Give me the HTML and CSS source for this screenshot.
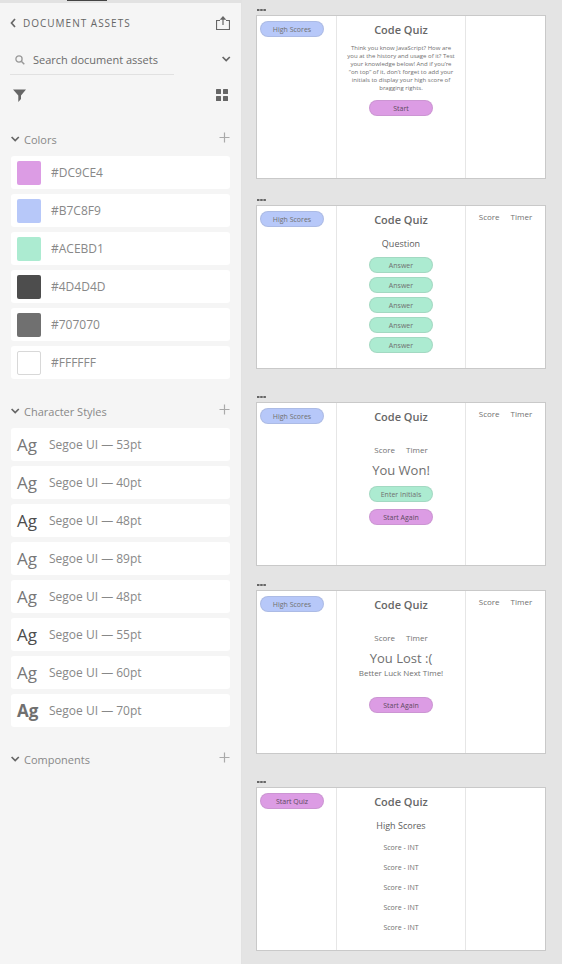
FILE: index.html
```html
<!DOCTYPE html>
<html lang="en">
<head>
<meta charset="utf-8">
<title>Document Assets</title>
<link rel="stylesheet" href="styles.css">
</head>
<body>
<svg class="defs" aria-hidden="true">
  <symbol id="chevron-down" viewBox="0 0 10 8"><path d="M.6 2 4.200 5.600 7.800 2" fill="none" stroke="currentColor" stroke-width="1.7"/></symbol>
  <symbol id="plus" viewBox="0 0 11 11"><path d="M5.500 0.500V10.500M0.500 5.500H10.500" fill="none" stroke="currentColor" stroke-width="1.2"/></symbol>
  <symbol id="dots" viewBox="0 0 9 2"><path d="M0 0h2.500v2h-2.500zM3.200 0h2.500v2h-2.500zM6.400 0h2.500v2h-2.500z" fill="currentColor"/></symbol>
</svg>
<div class="app">
  <aside class="panel">
    <div class="tabs"><span class="tab-marker"></span></div>
    <header class="panel-head">
      <button class="back" type="button" aria-label="Back"><svg width="6" height="10" viewBox="0 0 6 10"><path d="M5 1 1.500 5 5 9" fill="none" stroke="currentColor" stroke-width="1.7"/></svg></button>
      <h1>DOCUMENT ASSETS</h1>
      <button type="button" aria-label="Publish"><svg width="14" height="14" viewBox="0 0 14 14"><path d="M4 4.500H.500V13.500H13.500V4.500H10M7 9V2" fill="none" stroke="currentColor" stroke-width="1.200"/><path d="M3.700 3.800 7 0l3.300 3.800z" fill="currentColor"/></svg></button>
    </header>
    <div class="search">
      <label class="search-box">
        <svg width="10" height="10" viewBox="0 0 10 10" role="img" aria-label="Search"><circle cx="4" cy="4" r="3.100" fill="none" stroke="currentColor" stroke-width="1.300"/><path d="M6.300 6.300 9.300 9.300" stroke="currentColor" stroke-width="1.500"/></svg>
        <input type="text" placeholder="Search document assets">
      </label>
      <button type="button" aria-label="Search options"><svg width="10" height="8"><use href="#chevron-down"/></svg></button>
    </div>
    <div class="tools">
      <button type="button" aria-label="Filter"><svg width="13" height="13" viewBox="0 0 13 13"><path d="M0 .500H13L8 6.500V10L5.300 13V6.500z" fill="currentColor"/></svg></button>
      <button type="button" aria-label="Grid view"><svg width="12" height="12" viewBox="0 0 12 12"><g fill="currentColor"><rect width="5" height="5" rx=".5"/><rect x="7" width="5" height="5" rx=".5"/><rect y="7" width="5" height="5" rx=".5"/><rect x="7" y="7" width="5" height="5" rx=".5"/></g></svg></button>
    </div>

    <section class="group">
      <div class="group-head"><button class="toggle" type="button"><svg width="10" height="8"><use href="#chevron-down"/></svg>Colors</button><button class="add" type="button" aria-label="Add color"><svg width="11" height="11"><use href="#plus"/></svg></button></div>
      <ul class="rows">
        <li><span class="swatch pink"></span>#DC9CE4</li>
        <li><span class="swatch blue"></span>#B7C8F9</li>
        <li><span class="swatch green"></span>#ACEBD1</li>
        <li><span class="swatch dark"></span>#4D4D4D</li>
        <li><span class="swatch gray"></span>#707070</li>
        <li><span class="swatch white"></span>#FFFFFF</li>
      </ul>
    </section>
    <section class="group">
      <div class="group-head"><button class="toggle" type="button"><svg width="10" height="8"><use href="#chevron-down"/></svg>Character Styles</button><button class="add" type="button" aria-label="Add character style"><svg width="11" height="11"><use href="#plus"/></svg></button></div>
      <ul class="rows">
        <li><span class="sample">Ag</span>Segoe UI — 53pt</li>
        <li><span class="sample">Ag</span>Segoe UI — 40pt</li>
        <li><span class="sample strong">Ag</span>Segoe UI — 48pt</li>
        <li><span class="sample">Ag</span>Segoe UI — 89pt</li>
        <li><span class="sample">Ag</span>Segoe UI — 48pt</li>
        <li><span class="sample strong">Ag</span>Segoe UI — 55pt</li>
        <li><span class="sample">Ag</span>Segoe UI — 60pt</li>
        <li><span class="sample bold">Ag</span>Segoe UI — 70pt</li>
      </ul>
    </section>
    <section class="group">
      <div class="group-head"><button class="toggle" type="button"><svg width="10" height="8"><use href="#chevron-down"/></svg>Components</button><button class="add" type="button" aria-label="Add component"><svg width="11" height="11"><use href="#plus"/></svg></button></div>
    </section>
  </aside>

  <main class="canvas">
    <article class="artboard first">
      <div class="label"><svg width="9" height="2"><use href="#dots"/></svg></div>
      <div class="board">
        <div class="left"><button class="pill blue" type="button">High Scores</button></div>
        <div class="middle">
          <h2>Code Quiz</h2>
          <p class="intro">Think you know JavaScript? How are<br>you at the history and usage of it? Test<br>your knowledge below! And if you’re<br>“on top” of it, don’t forget to add your<br>initials to display your high score of<br>bragging rights.</p>
          <button class="pill pink" type="button">Start</button>
        </div>
        <div class="right"></div>
      </div>
    </article>
    <article class="artboard">
      <div class="label"><svg width="9" height="2"><use href="#dots"/></svg></div>
      <div class="board">
        <div class="left"><button class="pill blue" type="button">High Scores</button></div>
        <div class="middle">
          <h2>Code Quiz</h2>
          <h3>Question</h3>
          <div class="answers">
            <button class="pill green" type="button">Answer</button>
            <button class="pill green" type="button">Answer</button>
            <button class="pill green" type="button">Answer</button>
            <button class="pill green" type="button">Answer</button>
            <button class="pill green" type="button">Answer</button>
          </div>
        </div>
        <div class="right"><div class="stats"><span>Score</span><span>Timer</span></div></div>
      </div>
    </article>
    <article class="artboard far">
      <div class="label"><svg width="9" height="2"><use href="#dots"/></svg></div>
      <div class="board">
        <div class="left"><button class="pill blue" type="button">High Scores</button></div>
        <div class="middle">
          <h2>Code Quiz</h2>
          <div class="stats result-stats"><span>Score</span><span>Timer</span></div>
          <p class="result">You Won!</p>
          <div class="actions">
            <button class="pill green" type="button">Enter Initials</button>
            <button class="pill pink" type="button">Start Again</button>
          </div>
        </div>
        <div class="right"><div class="stats"><span>Score</span><span>Timer</span></div></div>
      </div>
    </article>
    <article class="artboard near">
      <div class="label"><svg width="9" height="2"><use href="#dots"/></svg></div>
      <div class="board">
        <div class="left"><button class="pill blue" type="button">High Scores</button></div>
        <div class="middle">
          <h2>Code Quiz</h2>
          <div class="stats result-stats"><span>Score</span><span>Timer</span></div>
          <p class="result">You Lost :(</p>
          <p class="consolation">Better Luck Next Time!</p>
          <button class="pill pink" type="button">Start Again</button>
        </div>
        <div class="right"><div class="stats"><span>Score</span><span>Timer</span></div></div>
      </div>
    </article>
    <article class="artboard far">
      <div class="label"><svg width="9" height="2"><use href="#dots"/></svg></div>
      <div class="board">
        <div class="left"><button class="pill pink" type="button">Start Quiz</button></div>
        <div class="middle">
          <h2>Code Quiz</h2>
          <h3>High Scores</h3>
          <ul class="scores"><li>Score - INT</li><li>Score - INT</li><li>Score - INT</li><li>Score - INT</li><li>Score - INT</li></ul>
        </div>
        <div class="right"></div>
      </div>
    </article>
  </main>
</div>
</body>
</html>
```
FILE: styles.css
```css
* { box-sizing: border-box; }
body, h1, h2, h3, p, ul { margin: 0; padding: 0; }
body {
  font-family: "Open Sans", "Noto Sans", sans-serif;
  color: #707070;
  background: #e4e4e4;
}
ul { list-style: none; }
button { border: 0; padding: 0; background: none; font: inherit; color: inherit; cursor: pointer; }
svg { display: block; flex: none; }
.defs { position: absolute; width: 0; height: 0; }
.app { display: flex; min-height: 100vh; }

/* Assets panel */
.panel {
  flex: 0 0 242px;
  background: #f5f5f5;
  border-right: 1px solid #e2e2e2;
  font-size: 12px;
  color: #666;
}
.tabs { height: 3px; background: #e2e2e2; padding-left: 67px; }
.tab-marker { display: block; width: 40px; height: 1px; background: #444; }
.panel-head { display: flex; align-items: center; height: 40px; padding: 0 11px 0 10px; }
.panel-head h1 { flex: 1; margin-left: 7px; font-size: 10px; font-weight: 400; letter-spacing: 1px; }
.search { display: flex; justify-content: space-between; align-items: center; height: 32px; padding: 0 9px 0 10px; }
.search-box {
  display: flex;
  align-items: center;
  gap: 8px;
  width: 164px;
  height: 32px;
  padding: 2px 0 0 5px;
  border-bottom: 1px solid #e1e1e1;
  color: #999;
}
.search-box input { flex: 1; min-width: 0; border: 0; padding: 0; outline: 0; background: none; font: inherit; font-size: 11px; color: #666; }
.search-box input::placeholder { color: #6b6b6b; opacity: 1; }
.tools { display: flex; justify-content: space-between; align-items: center; height: 40px; margin-bottom: 14px; padding: 0 13px; }
.group { padding: 0 11px; margin-bottom: 22px; color: #888; }
.group-head { display: flex; justify-content: space-between; height: 20px; margin-bottom: 7px; }
.toggle { display: flex; align-items: center; gap: 3px; font-size: 11px; }
.toggle svg { color: #666; }
.add { align-self: flex-start; padding-top: 3px; color: #aaa; }
.rows { display: grid; gap: 5px; }
.rows li { display: flex; align-items: center; height: 33px; padding-left: 6px; border-radius: 3px; background: #fff; }
.swatch { width: 24px; height: 24px; margin-right: 10px; border-radius: 2px; }
.swatch.dark { background: #4d4d4d; }
.swatch.gray { background: #707070; }
.swatch.white { background: #fff; border: 1px solid #d8d8d8; }
.sample { width: 32px; font-size: 17px; color: #777; }
.sample.strong { color: #4d4d4d; }
.sample.bold { font-weight: 700; color: #707070; }
.pink { background: #dc9ce4; }
.blue { background: #b7c8f9; }
.green { background: #acebd1; }

/* Canvas */
.canvas { flex: 1; min-width: 0; padding: 3px 16px 14px 14px; }
.artboard { margin-top: 14px; }
.artboard.first { margin-top: 0; }
.artboard.near { margin-top: 12px; }
.artboard.far { margin-top: 21px; }
.label { display: flex; align-items: center; height: 12px; padding: 2px 0 0 1px; color: #666; }
.board {
  display: grid;
  grid-template-columns: 79fr 130fr 79fr;
  min-height: 164px;
  border: 1px solid #c9c9c9;
  background: #fff;
  font-size: 7px;
  line-height: 8px;
}
.left { padding: 5px 3px; }
.middle { display: flex; flex-direction: column; align-items: center; padding-top: 6px; border: 1px solid #e6e6e6; border-width: 0 1px; text-align: center; }
.right { padding-top: 6px; }
.pill { display: block; width: 64px; height: 16px; padding-top: 2px; border: 1px solid rgba(112, 112, 112, .15); border-radius: 8px; color: #707070; }
.pill.pink { color: #5c4a60; }
h2 { font-size: 11px; line-height: 16px; font-weight: 600; color: #666; }
h3 { margin-top: 10px; font-size: 9px; line-height: 12px; font-weight: 400; color: #5c5c5c; }
.intro { margin: 6px 0 8px; font-size: 6px; white-space: nowrap; }
.answers { display: grid; gap: 4px; margin-top: 7px; }
.actions { display: grid; gap: 7px; margin-top: 8px; }
.stats { display: flex; justify-content: center; gap: 11px; font-size: 8px; line-height: 10px; }
.result-stats { margin-top: 20px; }
.result { margin-top: 7px; font-size: 13px; line-height: 16px; }
.consolation { margin: 2px 0 19px; font-size: 8px; line-height: 10px; white-space: nowrap; }
.scores { display: grid; gap: 10px; margin-top: 11px; line-height: 10px; }
```
